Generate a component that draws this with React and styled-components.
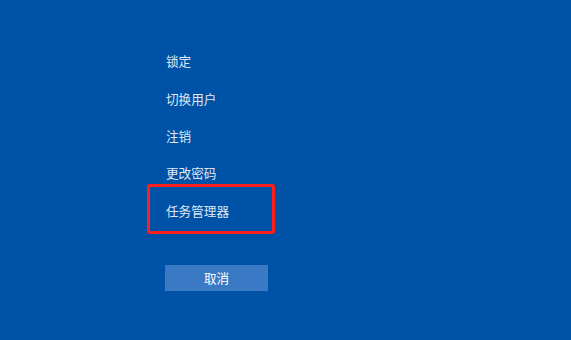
import React from "react";
import styled, { createGlobalStyle } from "styled-components";

const Global = createGlobalStyle`
  html, body { margin: 0; padding: 0; background: #0052a6; }
  body { font-family: "Noto Sans CJK SC", "Microsoft YaHei", sans-serif; }
`;

const Screen = styled.div`
  width: 571px;
  height: 340px;
  background: #0052a6;
  box-sizing: border-box;
  padding: 42px 0 0 165px;
  display: flex;
  flex-direction: column;
  align-items: flex-start;
`;

const Menu = styled.div`
  display: flex;
  flex-direction: column;
`;

const Item = styled.div`
  position: relative;
  height: 37.4px;
  display: flex;
  align-items: center;
  padding-left: 1px;
  font-size: 12.6px;
  color: #dfe8f4;
  white-space: nowrap;
`;

const Highlight = styled.div`
  position: absolute;
  left: -18px;
  top: -8px;
  width: 128px;
  height: 50px;
  box-sizing: border-box;
  border: 3px solid #ff1e1e;
  border-radius: 3px;
`;

const CancelButton = styled.button`
  margin-top: 36px;
  width: 103px;
  height: 26px;
  border: none;
  background: #3a7ac4;
  color: #ffffff;
  font-family: inherit;
  font-size: 12.6px;
  padding: 0;
  display: flex;
  align-items: center;
  justify-content: center;
`;

const items = ["锁定", "切换用户", "注销", "更改密码", "任务管理器"];

export default function App() {
  return (
    <>
      <Global />
      <Screen>
        <Menu>
          {items.map((t, i) => (
            <Item key={t}>
              {t}
              {i === items.length - 1 && <Highlight />}
            </Item>
          ))}
        </Menu>
        <CancelButton>取消</CancelButton>
      </Screen>
    </>
  );
}
